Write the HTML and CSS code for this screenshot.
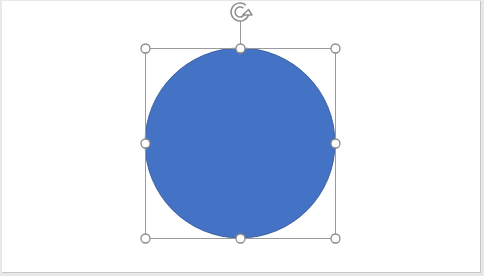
FILE: index.html
```html
<!DOCTYPE html>
<html>
<head>
<meta charset="utf-8">
<link rel="stylesheet" href="styles.css">
</head>
<body>
<div class="frame">
  <div class="canvas">
    <svg class="art" width="479" height="272" viewBox="2 1 479 272" xmlns="http://www.w3.org/2000/svg">
      <circle cx="240" cy="143" r="95" fill="#4472c4" stroke="#2f528f" stroke-width="0.8"/>
      <rect x="145.5" y="48.5" width="190" height="190" fill="none" stroke="#9a9a9a" stroke-width="1"/>
      <line x1="240.5" y1="21" x2="240.5" y2="44" stroke="#9a9a9a" stroke-width="1"/>
      <g fill="none" stroke-linecap="butt">
        <path d="M244.5 6.6 A7 7 0 1 0 246.8 13.8" stroke="#8e8e8e" stroke-width="5.5"/>
        <path d="M244.5 6.6 A7 7 0 1 0 246.8 13.8" stroke="#ffffff" stroke-width="2.5"/>
      </g>
      <path d="M242.8 15 L252 15 L248.5 9.5 Z" fill="#ffffff" stroke="#8e8e8e" stroke-width="1.4" stroke-linejoin="round"/>
      <g fill="#ffffff" stroke="#8a8a8a" stroke-width="1.3">
        <circle cx="145.5" cy="48.5" r="4.5"/>
        <circle cx="240.5" cy="48.5" r="4.5"/>
        <circle cx="335.5" cy="48.5" r="4.5"/>
        <circle cx="145.5" cy="143.5" r="4.5"/>
        <circle cx="335.5" cy="143.5" r="4.5"/>
        <circle cx="145.5" cy="238.5" r="4.5"/>
        <circle cx="240.5" cy="238.5" r="4.5"/>
        <circle cx="335.5" cy="238.5" r="4.5"/>
      </g>
    </svg>
  </div>
</div>
</body>
</html>
```

FILE: styles.css
```css
html, body {
  margin: 0;
  padding: 0;
  background: #e8e8e8;
}
.frame {
  width: 484px;
  height: 276px;
  padding: 1px 3px 3px 2px;
  box-sizing: border-box;
}
.canvas {
  width: 479px;
  height: 272px;
  background: #ffffff;
  border-right: 1px solid #c6c6c6;
  border-bottom: 1px solid #c6c6c6;
  box-sizing: border-box;
  overflow: hidden;
}
.art {
  display: block;
}
```
